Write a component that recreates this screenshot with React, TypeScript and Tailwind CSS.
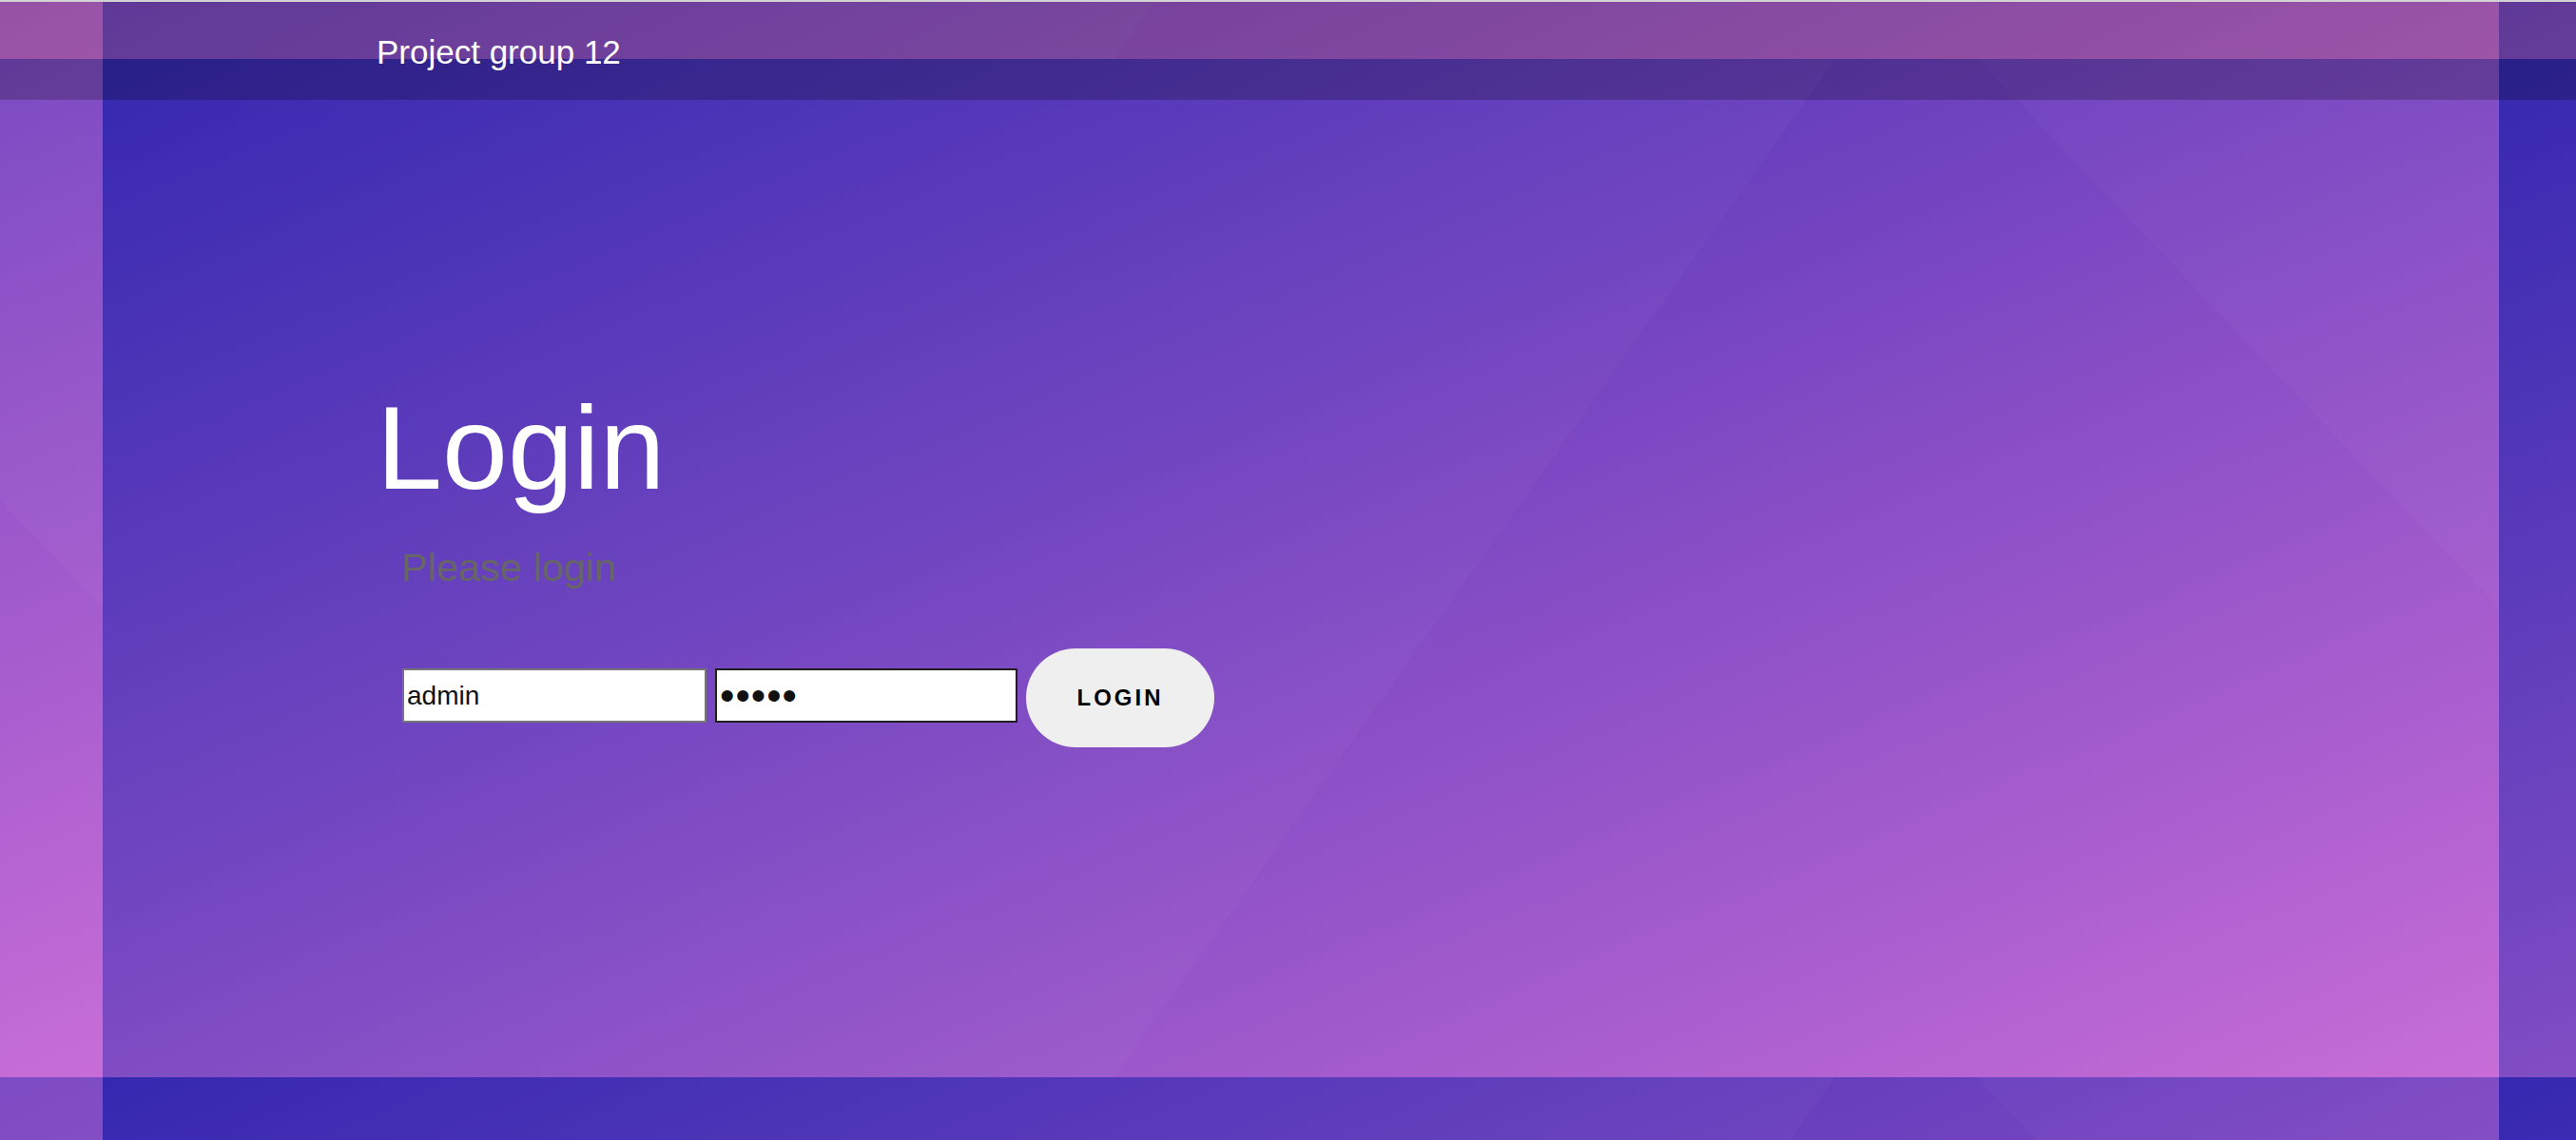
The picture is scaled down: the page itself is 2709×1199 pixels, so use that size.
import React from 'react';

export default function App() {
  return (
    <div className="min-h-screen font-['Liberation_Sans',Arial,sans-serif] bg-[linear-gradient(125.3deg,rgba(255,255,255,0.025)_1487px,transparent_1487px),linear-gradient(46.47deg,transparent_2167px,rgba(255,255,255,0.025)_2167px),linear-gradient(to_bottom_right,#3023ae,#c86dd7)] bg-[length:2520px_1071px] bg-[position:108px_62px] bg-repeat">
      <div className="h-[2px] bg-[#d3d3d3]" />
      <header className="h-[103px] bg-black/[0.22] pl-[396px] pt-[33px]">
        <span className="text-[35px] leading-[40px] text-white">Project group 12</span>
      </header>

      <main className="pl-[396px]">
        <h1 className="mt-[296px] text-[124px] leading-[140px] text-white">Login</h1>
        <p className="mt-[32px] pl-[26px] text-[41.5px] leading-[48px] text-[#666]">Please login</p>

        <form
          onSubmit={e => e.preventDefault()}
          className="mt-[61px] pl-[27px] flex items-start"
        >
          <input
            type="text"
            defaultValue="admin"
            className="mt-[21px] w-[320px] h-[57px] border-2 border-[#767676] bg-white px-[3px] text-[28px] text-[#111] outline-none"
          />
          <input
            type="password"
            defaultValue="admin"
            className="mt-[21px] ml-[9px] w-[318px] h-[57px] border-2 border-[#1f1f1f] bg-white px-[3px] text-[44px] tracking-[1px] text-[#111] outline-none"
          />
          <button
            type="submit"
            className="ml-[9px] w-[198px] h-[104px] rounded-[52px] bg-[#efefef] text-[24px] font-bold tracking-[3px] text-black"
          >
            LOGIN
          </button>
        </form>
      </main>
    </div>
  );
}
